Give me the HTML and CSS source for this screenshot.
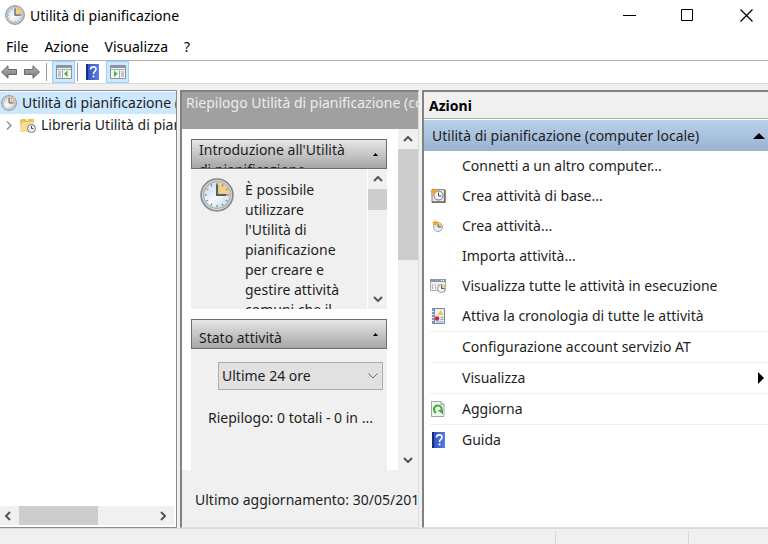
FILE: index.html
```html
<!DOCTYPE html>
<html lang="it">
<head>
    <meta charset="UTF-8">
    <meta name="viewport" content="width=device-width, initial-scale=1.0">
    <title>Utilità di pianificazione</title>
    <link rel="stylesheet" href="styles.css">
</head>
<body>

    <!-- Simboli usati più volte -->
    <svg class="defs" width="0" height="0" aria-hidden="true">
        <defs>
            <linearGradient id="face" x1="0" y1="0" x2="1" y2="1">
                <stop offset="0" stop-color="#b9d3e6"/>
                <stop offset="0.5" stop-color="#f6fafd"/>
                <stop offset="1" stop-color="#bcd0de"/>
            </linearGradient>
            <linearGradient id="grey" x1="0" y1="0" x2="0" y2="1">
                <stop offset="0" stop-color="#b8b8b8"/>
                <stop offset="1" stop-color="#777777"/>
            </linearGradient>
            <linearGradient id="blue" x1="0" y1="0" x2="1" y2="0">
                <stop offset="0" stop-color="#1c3a94"/>
                <stop offset="0.2" stop-color="#3558c4"/>
                <stop offset="1" stop-color="#5b7de0"/>
            </linearGradient>
        </defs>
        <symbol id="clock" viewBox="0 0 32 32">
            <circle cx="16" cy="16" r="15" fill="#d2d2d2" stroke="#858585" stroke-width="1.5"/>
            <circle cx="16" cy="16" r="12.5" fill="url(#face)" stroke="#a2a8ad"/>
            <path d="M16 16V4A12 12 0 0 1 28 16Z" fill="#f3cf83"/>
            <path d="M16 4.500v2M16 25.500v2M4.500 16h2M25.500 16h2M10.200 6l1 1.700M21.800 6l-1 1.700M6 10.200l1.700 1M6 21.800l1.700-1M26 21.800l-1.700-1M10.200 26l1-1.700M21.800 26l-1-1.700M26 10.200l-1.700 1" stroke="#6f7c86"/>
            <path d="M16 6v10h9" fill="none" stroke="#54616c" stroke-width="2"/>
        </symbol>
        <symbol id="help" viewBox="0 0 13 16">
            <path d="M0 0h13v16H0z" fill="url(#blue)"/>
            <path d="M0 0h2v16H0z" fill="#17307e"/>
            <path d="M4.500 5.500C4.500 2 10 2 10 5.300c0 2-2.500 2-2.500 4.700" fill="none" stroke="#ffffff" stroke-width="1.600"/>
            <path d="M6.600 11.500h1.800v1.800H6.600z" fill="#ffffff"/>
        </symbol>
        <symbol id="up" viewBox="0 0 10 6">
            <path d="M1 5l4-4 4 4" fill="none" stroke="#555555" stroke-width="2"/>
        </symbol>
        <symbol id="star" viewBox="0 0 8 8">
            <path d="M4 0l1 2 2.500-1L7 3.500 8 5 6 5.500 5 8 3.500 6 1 7l.5-2.500L0 3l2.500-.5z" fill="#f5a623"/>
        </symbol>
    </svg>

    <div class="window">
        <header class="titlebar">
            <svg class="app-icon" width="20" height="20"><use href="#clock"/></svg>
            <h1>Utilità di pianificazione</h1>
            <div class="window-buttons">
                <button type="button" aria-label="Riduci a icona"><svg width="13" height="13"><path d="M0 6.500h13" stroke="#000000"/></svg></button>
                <button type="button" aria-label="Ingrandisci"><svg width="13" height="13"><path d="M.5.5h11v11H.5z" fill="none" stroke="#000000"/></svg></button>
                <button type="button" aria-label="Chiudi"><svg width="13" height="13"><path d="M.5.5l12 12M12.500.5l-12 12" stroke="#000000" stroke-width="1.200"/></svg></button>
            </div>
        </header>

        <nav class="menubar">
            <button type="button">File</button>
            <button type="button">Azione</button>
            <button type="button">Visualizza</button>
            <button type="button">?</button>
        </nav>

        <div class="toolbar">
            <button type="button" aria-label="Indietro"><svg width="16" height="14"><path d="M.5 7L7 .8v3.700h8.500v5H7v3.700z" fill="url(#grey)" stroke="#666666"/></svg></button>
            <button type="button" aria-label="Avanti"><svg width="16" height="14"><path d="M15.500 7L9 .8v3.700H.5v5H9v3.700z" fill="url(#grey)" stroke="#666666"/></svg></button>
            <span class="separator"></span>
            <button type="button" class="pressed" aria-label="Mostra albero">
                <svg width="16" height="14">
                    <path d="M.5.5h15v13H.5z" fill="#f4f4f4" stroke="#8b9299"/>
                    <path d="M1 1h14v2H1z" fill="#8d969e"/>
                    <path d="M1 4.500h14M6.500 5v8" stroke="#a4abb2"/>
                    <path d="M2 7h3M2 9h3M2 11h3" stroke="#8d969e"/>
                    <path d="M11.500 5.500v6.500L8 8.800z" fill="#3fb927"/>
                </svg>
            </button>
            <span class="separator"></span>
            <button type="button" aria-label="Guida"><svg width="13" height="16"><use href="#help"/></svg></button>
            <button type="button" class="pressed" aria-label="Mostra riquadro azioni">
                <svg width="16" height="14">
                    <path d="M.5.5h15v13H.5z" fill="#f4f4f4" stroke="#8b9299"/>
                    <path d="M1 1h14v2H1z" fill="#8d969e"/>
                    <path d="M1 4.500h14M9.500 5v8" stroke="#a4abb2"/>
                    <path d="M11 7h3M11 9h3M11 11h3" stroke="#8d969e"/>
                    <path d="M4 5.500v6.500l3.500-3.200z" fill="#3fb927"/>
                </svg>
            </button>
        </div>

        <main class="panes">
            <section class="pane tree-pane">
                <ul class="tree">
                    <li class="selected">
                        <svg width="16" height="16"><use href="#clock"/></svg>
                        <span>Utilità di pianificazione (computer locale)</span>
                    </li>
                    <li class="child">
                        <svg class="expander" width="6" height="9"><path d="M1 .5l4 4-4 4" fill="none" stroke="#8a8a8a" stroke-width="1.300"/></svg>
                        <svg width="16" height="15">
                            <path d="M0 3l1-2h5l1 2h6v10l-12 1z" fill="#e9bf5c"/>
                            <path d="M2 4h12l-1 10H0z" fill="#f8dd92"/>
                            <path d="M8 1h6v3H8z" fill="#e9bf5c"/>
                            <circle cx="11.500" cy="10.500" r="4" fill="#e8f0f6" stroke="#6e7c88"/>
                            <path d="M11.500 8v2.500h2" fill="none" stroke="#3f4b55"/>
                        </svg>
                        <span>Libreria Utilità di pianificazione</span>
                    </li>
                </ul>
                <div class="scrollbar horizontal">
                    <button type="button" aria-label="Scorri a sinistra"><svg class="left" width="10" height="6"><use href="#up"/></svg></button>
                    <div class="track"><div class="thumb"></div></div>
                    <button type="button" aria-label="Scorri a destra"><svg class="right" width="10" height="6"><use href="#up"/></svg></button>
                </div>
            </section>

            <section class="pane summary-pane">
                <h2>Riepilogo Utilità di pianificazione (computer locale)</h2>
                <div class="summary-body">
                    <div class="groups">
                        <article class="group intro">
                            <h3>
                                <span>Introduzione all'Utilità di pianificazione</span>
                                <svg width="5" height="3"><path d="M2.500 0L5 3H0z"/></svg>
                            </h3>
                            <div class="intro-body">
                                <svg width="34" height="34"><use href="#clock"/></svg>
                                <p>È possibile utilizzare l'Utilità di pianificazione per creare e gestire attività comuni che il</p>
                                <div class="scrollbar">
                                    <button type="button" aria-label="Scorri testo in su"><svg width="10" height="6"><use href="#up"/></svg></button>
                                    <div class="track"><div class="thumb"></div></div>
                                    <button type="button" aria-label="Scorri testo in giù"><svg class="down" width="10" height="6"><use href="#up"/></svg></button>
                                </div>
                            </div>
                        </article>
                        <article class="group status">
                            <h3>
                                <span>Stato attività</span>
                                <svg width="5" height="3"><path d="M2.500 0L5 3H0z"/></svg>
                            </h3>
                            <div class="status-body">
                                <div class="period">
                                    <select aria-label="Periodo">
                                        <option>Ultime 24 ore</option>
                                        <option>Ultima ora</option>
                                        <option>Ultimi 7 giorni</option>
                                    </select>
                                    <svg width="10" height="6"><path d="M.5.5L5 5 9.500.5" fill="none" stroke="#666666"/></svg>
                                </div>
                                <p>Riepilogo: 0 totali - 0 in ...</p>
                            </div>
                        </article>
                    </div>
                    <div class="scrollbar">
                        <button type="button" aria-label="Scorri in su"><svg width="10" height="6"><use href="#up"/></svg></button>
                        <div class="track"><div class="thumb"></div></div>
                        <button type="button" aria-label="Scorri in giù"><svg class="down" width="10" height="6"><use href="#up"/></svg></button>
                    </div>
                </div>
                <p class="updated">Ultimo aggiornamento: 30/05/2017</p>
            </section>

            <section class="pane actions-pane">
                <h2>Azioni</h2>
                <h3>
                    <span>Utilità di pianificazione (computer locale)</span>
                    <svg width="12" height="6"><path d="M6 0l6 6H0z"/></svg>
                </h3>
                <ul class="actions">
                    <li><button type="button"><span class="icon"></span>Connetti a un altro computer...</button></li>
                    <li><button type="button">
                        <span class="icon">
                            <svg width="16" height="16">
                                <path d="M2 1.500h12.500v13H2z" fill="#e6e2df" stroke="#8c817c"/>
                                <path d="M2 14h13V2" fill="none" stroke="#75645d" stroke-width="1.500"/>
                                <circle cx="8.500" cy="7.500" r="4.500" fill="#f2f7fa" stroke="#6b7780"/>
                                <path d="M8.500 4.500v3.500h3" fill="none" stroke="#3e4a53"/>
                                <use href="#star" width="7" height="7"/>
                            </svg>
                        </span>Crea attività di base...</button></li>
                    <li><button type="button">
                        <span class="icon">
                            <svg width="16" height="16">
                                <circle cx="8" cy="9" r="4.500" fill="#e4eef5" stroke="#9aabb8"/>
                                <path d="M8 9V5a4 4 0 0 1 4 4z" fill="#f5c163"/>
                                <path d="M8 6v3h3" fill="none" stroke="#4e5c68"/>
                                <use href="#star" x="2" y="2" width="6" height="6"/>
                            </svg>
                        </span>Crea attività...</button></li>
                    <li><button type="button"><span class="icon"></span>Importa attività...</button></li>
                    <li><button type="button">
                        <span class="icon">
                            <svg width="16" height="14">
                                <path d="M.5.5h15v11H.5z" fill="#f1f1f1" stroke="#a5abb0"/>
                                <path d="M0 0h16v3H0z" fill="#8d98a3"/>
                                <path d="M11 1.500h1M13 1.500h1" stroke="#ffffff"/>
                                <path d="M2.500 5v5M5.500 5v5M8.500 5v5" stroke="#b3b9be"/>
                                <circle cx="11.500" cy="9.500" r="4" fill="#edf3f7" stroke="#8b979f"/>
                                <path d="M11.500 9.500v-4a4 4 0 0 1 4 4z" fill="#efcf8b"/>
                                <path d="M11.500 6.500v3h3" fill="none" stroke="#4c565e"/>
                            </svg>
                        </span>Visualizza tutte le attività in esecuzione</button></li>
                    <li><button type="button">
                        <span class="icon">
                            <svg width="14" height="16">
                                <path d="M1.500.5h12v15h-12z" fill="#e9f0fa" stroke="#6f83a8"/>
                                <path d="M1 1h3v14H1z" fill="#8093b5"/>
                                <path d="M0 3.500h3M0 6.500h3M0 9.500h3M0 12.500h3" stroke="#dfe5ef"/>
                                <path d="M9.500 2l3 5h-6z" fill="#f4cf1f"/>
                                <circle cx="6" cy="10.500" r="2.300" fill="#d9252b"/>
                                <path d="M9.500 9.500h3M9.500 11.500h3M5 13.800h7" stroke="#8ba0c5"/>
                            </svg>
                        </span>Attiva la cronologia di tutte le attività</button></li>
                    <li class="divided"><button type="button"><span class="icon"></span>Configurazione account servizio AT</button></li>
                    <li class="divided"><button type="button"><span class="icon"></span>Visualizza<svg class="submenu" width="6" height="12"><path d="M0 0l6 6-6 6z"/></svg></button></li>
                    <li class="divided"><button type="button">
                        <span class="icon">
                            <svg width="14" height="16">
                                <path d="M.5.5h9.500l3 3v12H.5z" fill="#f5f5f5" stroke="#a3a3a3"/>
                                <path d="M10 .5v3h3" fill="none" stroke="#a3a3a3"/>
                                <path d="M5 12C1.500 9.500 3 4.500 6.800 4.500c3.700 0 4.700 3.500 3.200 6" fill="none" stroke="#36b32a" stroke-width="2"/>
                                <path d="M6.500 9l5.500 0v4.500z" fill="#36b32a"/>
                            </svg>
                        </span>Aggiorna</button></li>
                    <li class="divided"><button type="button"><span class="icon"><svg width="13" height="16"><use href="#help"/></svg></span>Guida</button></li>
                </ul>
            </section>
        </main>

        <footer class="statusbar">
            <span></span>
            <span></span>
            <span></span>
        </footer>
    </div>

</body>
</html>
```
FILE: styles.css
```css
* {
    box-sizing: border-box;
}

body {
    margin: 0;
    font-family: "Noto Sans", "Open Sans", sans-serif;
    font-size: 14px;
    line-height: 20px;
    color: #1e1e1e;
}

h1, h2, h3, p, ul {
    margin: 0;
    padding: 0;
    font-size: 14px;
    font-weight: normal;
}

ul {
    list-style: none;
}

svg {
    display: block;
    flex: none;
}

button {
    display: flex;
    align-items: center;
    justify-content: center;
    margin: 0;
    padding: 0;
    border: none;
    background: none;
    font: inherit;
    color: inherit;
}

.defs {
    position: absolute;
}

.window {
    display: flex;
    flex-direction: column;
    height: 100vh;
    overflow: hidden;
    background-color: #f0f0f0;
}

/* Barra del titolo */
.titlebar {
    display: flex;
    align-items: center;
    gap: 5px;
    height: 32px;
    padding-left: 5px;
    background-color: #ffffff;
    color: #000000;
}

.app-icon {
    margin-bottom: 2px;
}

.window-buttons {
    display: flex;
    margin-left: auto;
}

.window-buttons button {
    width: 58px;
    height: 30px;
    padding-bottom: 1px;
}

.window-buttons button:last-child {
    width: 52px;
    padding-left: 8px;
}

.menubar {
    display: flex;
    gap: 16px;
    height: 28px;
    padding: 2px 6px 0;
    background-color: #ffffff;
    color: #000000;
}

.menubar button {
    height: 26px;
}

.toolbar {
    display: flex;
    align-items: center;
    height: 24px;
    border-top: 1px solid #b4b4b4;
    border-bottom: 1px solid #d9d9d9;
    background-color: #ffffff;
}

.toolbar button {
    width: 23px;
    height: 22px;
    padding-right: 5px;
}

.toolbar .pressed {
    padding: 0;
    border: 1px solid #99d1ff;
    background-color: #cce8ff;
}

.separator {
    width: 1px;
    height: 18px;
    margin: 0 5px 0 0;
    background-color: #9a9a9a;
}

.toolbar .pressed + .separator {
    margin: 0 5px 0 2px;
}

/* Riquadri */
.panes {
    display: grid;
    grid-template-columns: 177fr 239fr 346fr;
    gap: 3px;
    flex: 1;
    min-height: 0;
    padding-top: 6px;
    border-bottom: 1px solid #d9d9d9;
}

.pane {
    display: flex;
    flex-direction: column;
    min-width: 0;
    overflow: hidden;
    border: 2px solid #828282;
    border-right: 1px solid #dddddd;
    border-bottom: 1px solid #dddddd;
}

.tree-pane {
    border: 1px solid #8b8b96;
    border-left: none;
    background-color: #ffffff;
}

.tree {
    padding-top: 1px;
}

.tree li {
    display: flex;
    align-items: center;
    gap: 5px;
    height: 22px;
    padding-left: 1px;
    white-space: nowrap;
}

.tree .child {
    padding-left: 6px;
}

.tree .expander {
    margin-right: 3px;
}

.tree .selected {
    background-color: #cce8ff;
}

/* Barre di scorrimento */
.scrollbar {
    display: flex;
    flex-direction: column;
    flex: none;
    width: 20px;
    background-color: #f0f0f0;
}

.scrollbar button {
    flex: none;
    height: 20px;
}

.track {
    flex: 1;
}

.thumb {
    height: 37%;
    background-color: #cdcdcd;
}

.scrollbar.horizontal {
    flex-direction: row;
    width: auto;
    height: 19px;
    margin: auto 2px 2px 0;
}

.horizontal button {
    width: 19px;
    height: 19px;
    padding-right: 3px;
}

.horizontal .thumb {
    width: 58%;
    height: 100%;
}

.down {
    transform: rotate(180deg);
}

.left {
    transform: rotate(-90deg);
}

.right {
    transform: rotate(90deg);
}

/* Riepilogo */
.summary-pane h2 {
    flex: none;
    height: 37px;
    padding: 1px 0 0 4px;
    overflow: hidden;
    background-color: #a0a0a0;
    color: #ececec;
    white-space: nowrap;
}

.summary-body {
    display: flex;
    justify-content: space-between;
    flex: 1;
    min-height: 0;
    background-color: #ffffff;
}

.groups {
    display: flex;
    flex-direction: column;
    gap: 10px;
    flex: 1;
    min-width: 0;
    padding: 10px 11px 0 9px;
}

.group {
    background-color: #f0f0f0;
}

.group h3 {
    display: flex;
    align-items: center;
    justify-content: space-between;
    height: 30px;
    padding: 0 8px 0 7px;
    overflow: hidden;
    border: 1px solid #6e6e6e;
    background: linear-gradient(#e6e6e6, #a6a6a6);
}

.intro h3 span {
    align-self: flex-start;
    width: 160px;
    padding-right: 8px;
}

.status h3 span {
    padding-top: 8px;
}

.intro-body {
    display: flex;
    height: 140px;
    overflow: hidden;
}

.intro-body > svg {
    margin: 9px 11px 0 9px;
}

.intro-body p {
    flex: 1;
    min-width: 0;
    padding: 11px 16px 0 0;
}

.intro-body .scrollbar {
    margin-left: auto;
    border-left: 1px solid #ffffff;
}

.intro-body .thumb {
    height: 21%;
}

.status {
    flex: 1;
}

.status-body {
    padding: 13px 4px 0 17px;
}

.period {
    display: grid;
    align-items: center;
    margin-left: 10px;
}

.period select {
    grid-area: 1 / 1;
    width: 100%;
    height: 28px;
    padding: 0 3px;
    border: 1px solid #adadad;
    border-radius: 0;
    background-color: #e1e1e1;
    appearance: none;
    font: inherit;
    color: inherit;
}

.period svg {
    grid-area: 1 / 1;
    justify-self: end;
    margin-right: 5px;
    pointer-events: none;
}

.status-body p {
    padding-top: 18px;
    white-space: nowrap;
}

.updated {
    flex: none;
    height: 57px;
    padding: 20px 0 0 13px;
    overflow: hidden;
    white-space: nowrap;
}

/* Azioni */
.actions-pane {
    border-right: none;
    background-color: #ffffff;
}

.actions-pane h2 {
    height: 27px;
    padding: 4px 5px 0;
    border-bottom: 1px solid #b0b0b0;
    background-color: #f0f0f0;
    color: #000000;
    font-weight: bold;
}

.actions-pane h3 {
    display: flex;
    align-items: center;
    justify-content: space-between;
    height: 31px;
    margin-top: 1px;
    padding: 0 3px 0 8px;
    background: linear-gradient(#b9d1ea, #99b4d1);
}

.actions button {
    justify-content: flex-start;
    width: 100%;
    height: 30px;
    padding: 0 4px 0 6px;
}

.actions .divided {
    margin-left: 6px;
    border-top: 1px solid #f0f0f0;
}

.actions .divided button {
    padding-left: 0;
}

.icon {
    display: flex;
    justify-content: center;
    width: 16px;
    margin-right: 16px;
}

.submenu {
    margin-left: auto;
}

.statusbar {
    display: grid;
    grid-template-columns: 555fr 133fr 80fr;
    height: 15px;
    padding-top: 2px;
}

.statusbar span + span {
    border-left: 1px solid #d7d7d7;
}
```
